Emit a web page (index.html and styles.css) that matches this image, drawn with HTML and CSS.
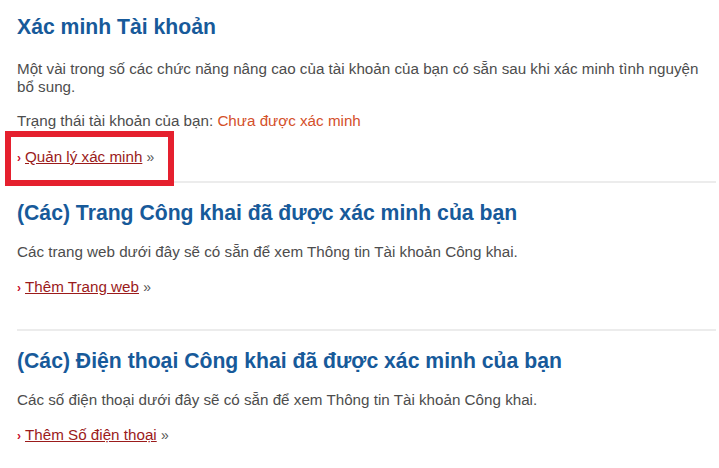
FILE: index.html
```html
<!DOCTYPE html>
<html lang="vi">
<head>
  <meta charset="UTF-8" />
  <title>Xác minh Tài khoản</title>
  <link rel="stylesheet" href="styles.css">
</head>
<body>

  <main class="container">
    <section class="bloco primeiro">
      <h2>Xác minh Tài khoản</h2>
      <p class="texto">Một vài trong số các chức năng nâng cao của tài khoản của bạn có sẵn sau khi xác minh tình nguyện bổ sung.</p>
      <p class="status">Trạng thái tài khoản của bạn: <span class="nao-verificado">Chưa được xác minh</span></p>
      <p class="acao">
        <span class="seta">›</span><a href="#">Quản lý xác minh</a> <span class="mais">»</span>
        <span class="destaque"></span>
      </p>
    </section>

    <section class="bloco">
      <h2>(Các) Trang Công khai đã được xác minh của bạn</h2>
      <p class="texto">Các trang web dưới đây sẽ có sẵn để xem Thông tin Tài khoản Công khai.</p>
      <p class="acao"><span class="seta">›</span><a href="#">Thêm Trang web</a> <span class="mais">»</span></p>
    </section>

    <section class="bloco ultimo">
      <h2>(Các) Điện thoại Công khai đã được xác minh của bạn</h2>
      <p class="texto">Các số điện thoại dưới đây sẽ có sẵn để xem Thông tin Tài khoản Công khai.</p>
      <p class="acao"><span class="seta">›</span><a href="#">Thêm Số điện thoại</a> <span class="mais">»</span></p>
    </section>
  </main>

</body>
</html>
```

FILE: styles.css
```css
body {
  font-family: "Liberation Sans", Arial, sans-serif;
  background-color: #fff;
  color: #4d4d4d;
  margin: 0;
  padding: 0;
}

.container {
  padding: 15px 3px 0 17px;
}

.bloco {
  border-bottom: 2px solid #ececec;
  padding-bottom: 32px;
  margin-bottom: 18px;
}

.bloco.primeiro {
  padding-bottom: 14px;
}

.bloco.ultimo {
  border-bottom: none;
  padding-bottom: 0;
  margin-bottom: 0;
}

h2 {
  margin: 0;
  font-size: 21.2px;
  line-height: 24px;
  font-weight: bold;
  color: #175a9a;
}

p {
  margin: 0;
  font-size: 15.2px;
  line-height: 18px;
}

.primeiro .texto {
  margin-top: 21px;
}

.texto {
  margin-top: 18px;
}

.status {
  margin-top: 16px;
}

.nao-verificado {
  color: #d4502a;
}

.acao {
  margin-top: 17px;
  position: relative;
}

.primeiro .acao {
  margin-top: 18px;
}

.seta {
  color: #c8102e;
  font-weight: bold;
  font-size: 12px;
  margin-right: 4px;
}

.acao a {
  color: #9b1b1b;
  text-decoration: underline;
}

.mais {
  color: #555;
  font-size: 14px;
}

.destaque {
  position: absolute;
  left: -12px;
  top: -17px;
  width: 157px;
  height: 43px;
  border: 6px solid #e5202e;
}
```
